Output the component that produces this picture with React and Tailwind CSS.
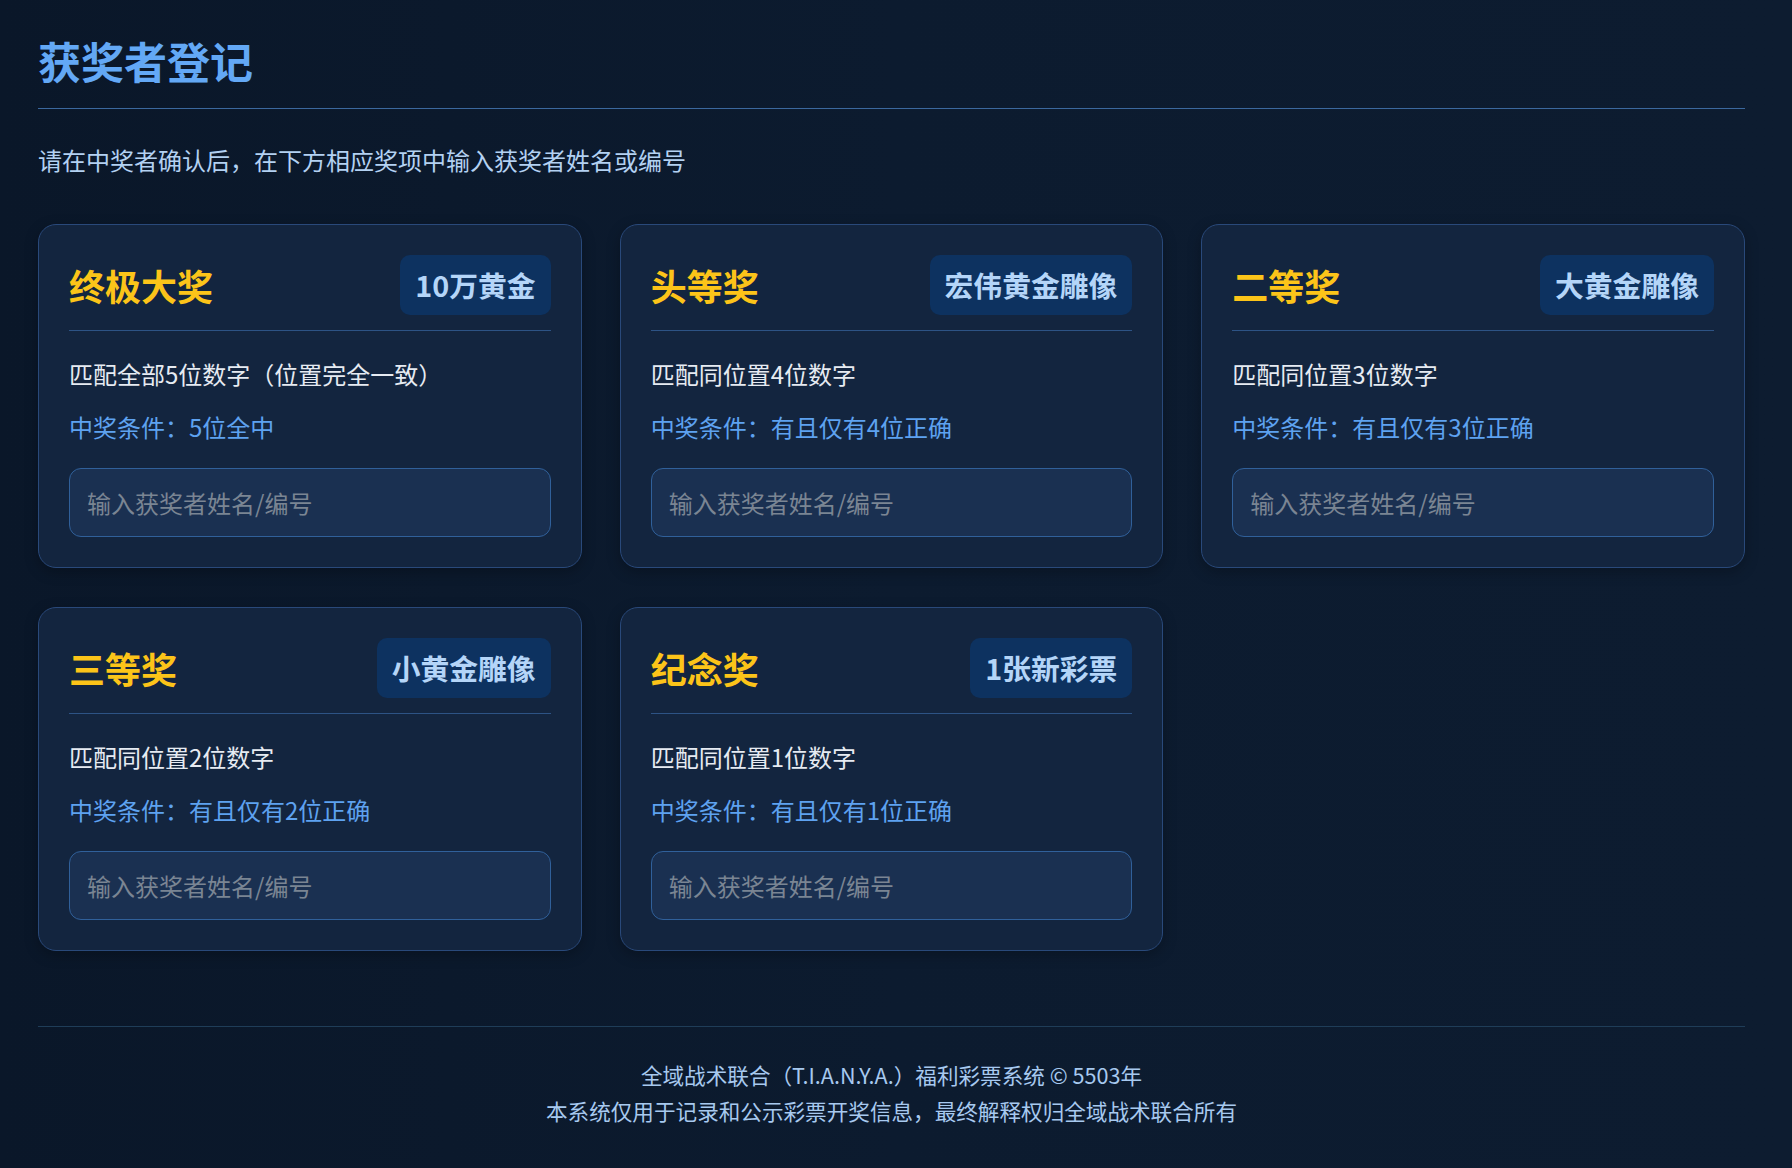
const prizes = [
  {
    name: "终极大奖",
    reward: "10万黄金",
    desc: "匹配全部5位数字（位置完全一致）",
    cond: "中奖条件：5位全中",
  },
  {
    name: "头等奖",
    reward: "宏伟黄金雕像",
    desc: "匹配同位置4位数字",
    cond: "中奖条件：有且仅有4位正确",
  },
  {
    name: "二等奖",
    reward: "大黄金雕像",
    desc: "匹配同位置3位数字",
    cond: "中奖条件：有且仅有3位正确",
  },
  {
    name: "三等奖",
    reward: "小黄金雕像",
    desc: "匹配同位置2位数字",
    cond: "中奖条件：有且仅有2位正确",
  },
  {
    name: "纪念奖",
    reward: "1张新彩票",
    desc: "匹配同位置1位数字",
    cond: "中奖条件：有且仅有1位正确",
  },
];

function PrizeCard({ prize }) {
  return (
    <div className="rounded-[18px] border border-[#29497a] bg-[#13253f] p-[30px] shadow-[0_4px_14px_rgba(0,0,0,0.25)]">
      {/* header */}
      <div className="flex items-center justify-between border-b border-[#2d5385] pb-[15px]">
        <h2 className="text-[36px] leading-[44px] font-bold text-[#fcc419]">
          {prize.name}
        </h2>
        <span className="rounded-[10px] bg-[#0d3260] px-[15px] py-[12px] text-[28.8px] leading-[36px] font-bold text-[#b4d5f8]">
          {prize.reward}
        </span>
      </div>

      <p className="mt-[25px] text-[24px] leading-[36px] text-[#e6ebf2]">
        {prize.desc}
      </p>

      <p className="mt-[17px] text-[24px] leading-[36px] text-[#5ea2f0]">
        {prize.cond}
      </p>

      <input
        type="text"
        placeholder="输入获奖者姓名/编号"
        className="mt-[23px] block h-[69px] w-full rounded-[12px] border border-[#30609a] bg-[#1a3051] px-[17px] text-[24px] text-[#e6ebf2] outline-none placeholder:text-[#7a8593]"
      />
    </div>
  );
}

export default function App() {
  return (
    <div
      className="min-h-screen bg-gradient-to-r from-[#0a1729] via-[#0c1b2f] to-[#0d1c30] pl-[38px] pr-[47px]"
      style={{ fontFamily: '"Noto Sans CJK SC", "Noto Sans", sans-serif' }}
    >
      {/* title */}
      <div className="border-b border-[#3b689e] pt-[34px] pb-[22px]">
        <h1 className="text-[43px] leading-[52px] font-bold text-[#63a8f5]">
          获奖者登记
        </h1>
      </div>

      <p className="mt-[33px] text-[24px] leading-[36px] text-[#b3d1f2]">
        请在中奖者确认后，在下方相应奖项中输入获奖者姓名或编号
      </p>

      <div className="mt-[46px] grid grid-cols-3 gap-x-[38px] gap-y-[39px]">
        {prizes.map((p) => (
          <PrizeCard key={p.name} prize={p} />
        ))}
      </div>

      {/* footer */}
      <footer className="mt-[75px] border-t border-[#1f3d58] pt-[30px] pb-[39px] text-center text-[21.6px] leading-[36px] text-[#a7c9ef]">
        <p>全域战术联合（T.I.A.N.Y.A.）福利彩票系统 © 5503年</p>
        <p>本系统仅用于记录和公示彩票开奖信息，最终解释权归全域战术联合所有</p>
      </footer>
    </div>
  );
}
